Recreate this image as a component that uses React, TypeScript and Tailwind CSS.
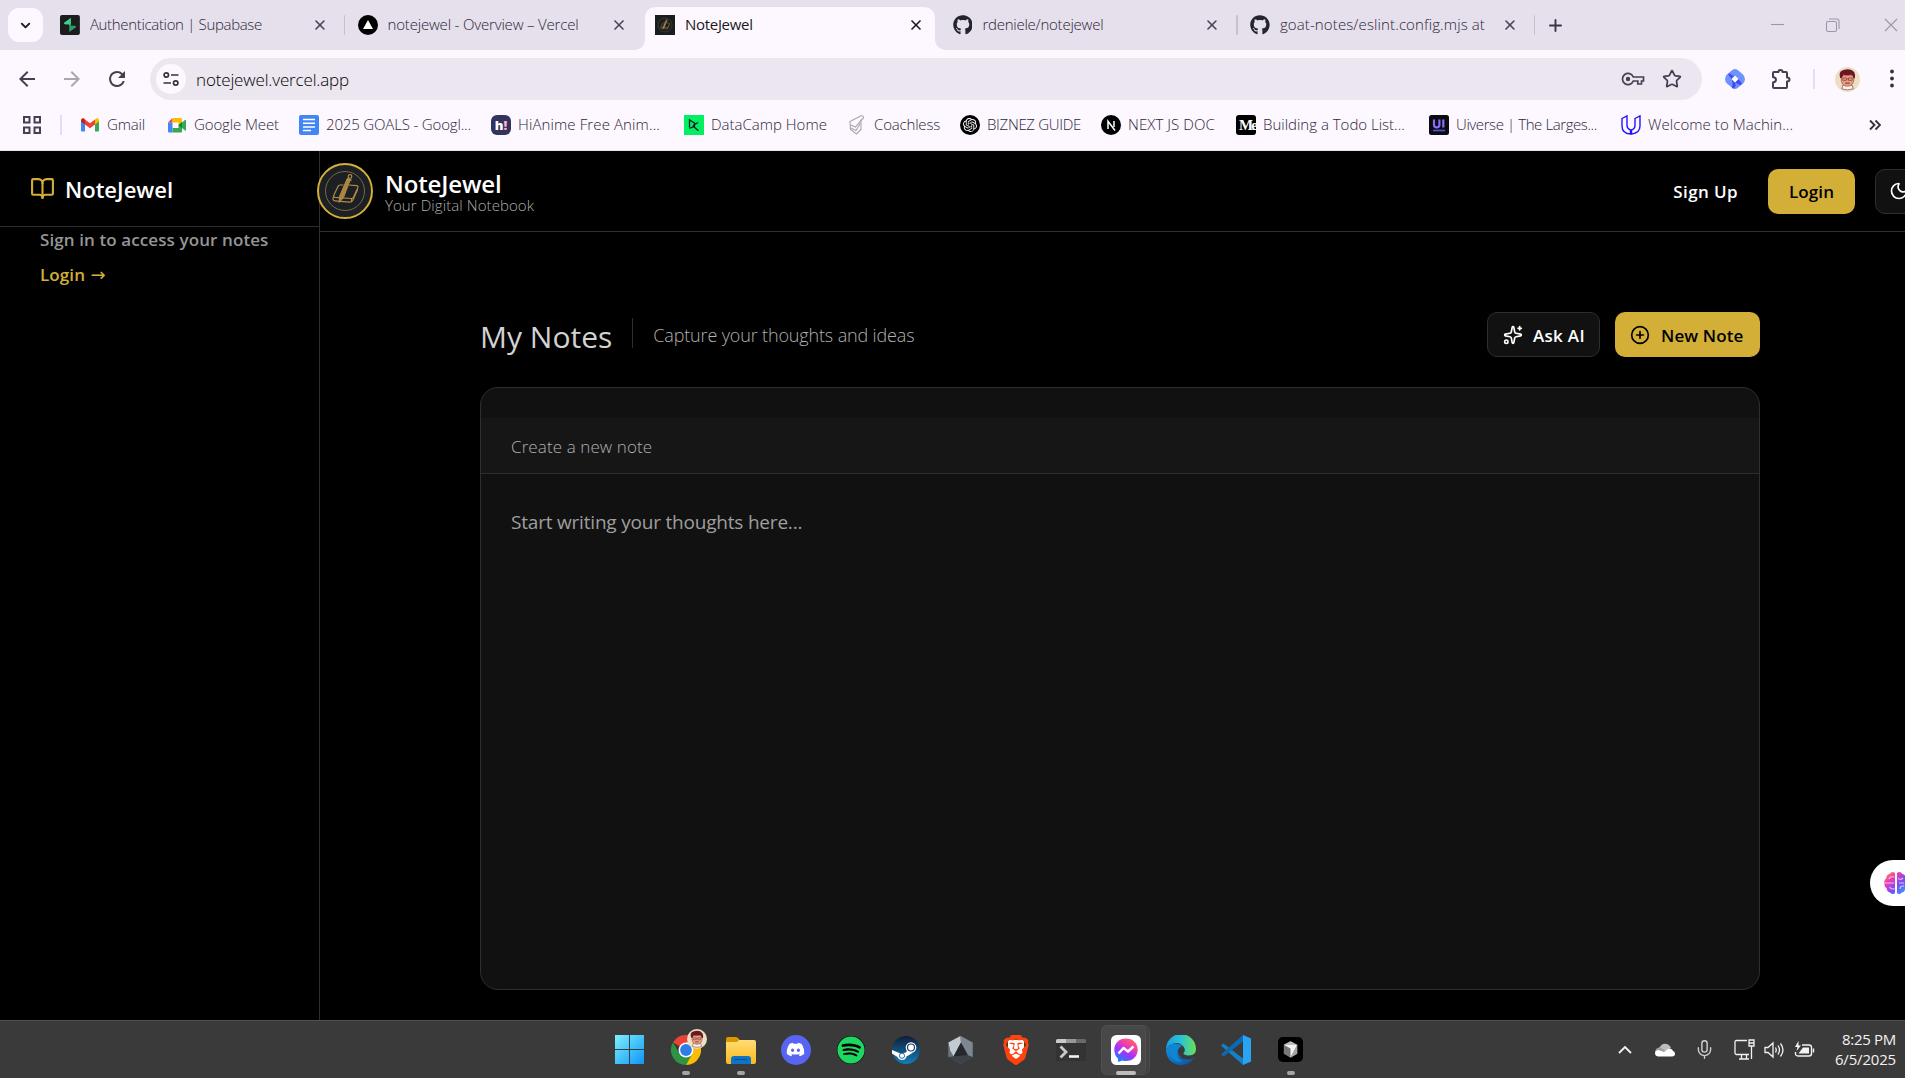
import type { ReactNode } from "react";
import { BookOpen, ChevronDown, Mic, Moon, CirclePlus, Plus, Sparkles, Star, X } from "lucide-react";
import { FaDiscord, FaGithub, FaSpotify } from "react-icons/fa6";
import { SiBrave, SiOpenai } from "react-icons/si";

/* ---------- favicons and brand marks ---------- */

const SupabaseIcon = () => (
  <svg viewBox="0 0 20 20" className="size-5">
    <rect width="20" height="20" rx="2" fill="#1c1c1c" />
    <path d="M10.800 3v6.200H5.200c-1.200 0-1.500-.9-.9-1.700z" fill="#3ecf8e" />
    <path d="M9.300 17v-6.200h5.600c1.200 0 1.500.9.900 1.700z" fill="#2a9d68" />
    <path d="M10.800 3v7.800h-1.500V9.200H5z" fill="#3ecf8e" />
  </svg>
);

const VercelIcon = () => (
  <svg viewBox="0 0 20 20" className="size-5">
    <circle cx="10" cy="10" r="10" fill="#000" />
    <path d="M10 5l5 9H5z" fill="#fff" />
  </svg>
);

const JewelMark = ({ className }: { className: string }) => (
  <svg viewBox="0 0 56 56" className={className} fill="none" stroke="#b08c47" strokeWidth="1.200">
    <circle cx="28" cy="28" r="19.500" strokeWidth="0.900" stroke="#857042" />
    <path d="M23 22h3.500M32 22l7.500.7q2 .3 1.300 2l-4.300 9.500q-.7 1.500-2.500 1.300l-16-1.200q-2-.3-1.100-2.200l4.100-8.700q.7-1.300 2-1.400" />
    <path d="M16.500 33.500q-1.500 4 1.500 4.300l14.500 1.400q2.300.1 3.200-1.800l4.900-11" />
    <path d="M34.500 36v3" />
    <path d="M33.200 17l-6.700 17.500-4.300 5 .3-6 7.500-17.500z" fill="#a9853f" strokeWidth="1" />
    <circle cx="33" cy="13.500" r="1.800" />
    <path d="M30 15.500l4.500 2" strokeWidth="1.600" />
  </svg>
);

const MiniJewel = () => (
  <div className="size-5 bg-[#1a1d20]">
    <JewelMark className="size-5" />
  </div>
);

const Github = () => <FaGithub className="size-5 text-[#24232e]" />;

const GmailIcon = () => (
  <svg viewBox="0 0 20 20" className="size-5">
    <path d="M1 5.500v10q0 1 1 1h3V8z" fill="#4285f4" />
    <path d="M19 5.500v10q0 1-1 1h-3V8z" fill="#34a853" />
    <path d="M15 4.500V9.500l4-3V5.300c0-1.900-2-2.500-3.300-1.500z" fill="#fbbc04" />
    <path d="M5 4.500V9.500l-4-3V5.300c0-1.900 2-2.500 3.300-1.500z" fill="#c5221f" />
    <path d="M5 4.500l5 3.800 5-3.800v5l-5 3.800-5-3.800z" fill="#ea4335" />
  </svg>
);

const MeetIcon = () => (
  <svg viewBox="0 0 20 20" className="size-5">
    <path d="M1 7.500h4.500V17.500H2q-1 0-1-1z" fill="#4285f4" />
    <path d="M1 7.500L5.500 3v4.500z" fill="#ea4335" />
    <path d="M5.500 3H14q1 0 1 1v5l-3.500 2V7.500h-6z" fill="#fbbc04" />
    <path d="M5.500 13h6v-3l3.500-2.500v9q0 1-1 1H5.500z" fill="#34a853" />
    <path d="M15 7.500l3-2.500q1-.6 1 .4v9.700q0 1-1 .4l-3-2.500z" fill="#34a853" />
    <path d="M11.500 10l3.500-3v6z" fill="#188038" />
  </svg>
);

const DocsIcon = () => (
  <svg viewBox="0 0 20 20" className="size-5">
    <rect width="20" height="20" rx="2" fill="#4285f4" />
    <path d="M4 4.500h12M4 8.200h12M4 11.900h12M4 15.600h8" stroke="#fff" strokeWidth="1.500" />
  </svg>
);

const HiAnimeIcon = () => (
  <div className="flex size-5 items-center justify-center rounded-md bg-[#35325c] text-[13px] leading-none font-extrabold text-white">
    h<span className="text-[#ffb3dc]">!</span>
  </div>
);

const DataCampIcon = () => (
  <svg viewBox="0 0 20 20" className="size-5">
    <rect width="20" height="20" fill="#03ef62" />
    <path d="M5.500 12.500V5l5 3v3l-5 2.500M9 10.500l5-3M9.500 11.500l5 4.300" fill="none" stroke="#05192d" strokeWidth="1.300" />
  </svg>
);

const CoachlessIcon = () => (
  <svg viewBox="0 0 20 20" className="size-5" fill="none" stroke="#a8a4ad" strokeWidth="1.100">
    <path d="M3 6.500L14 .8q2.500-.3 2.500 2L14 6v8.500L9.500 19 3.500 14.500z" />
    <path d="M4 10l4.500 2L15 4M4 13l5 2.500L13.500 8" />
  </svg>
);

const OpenAiIcon = () => (
  <div className="flex size-5 items-center justify-center rounded-full bg-black">
    <SiOpenai className="size-3.5 text-white" />
  </div>
);

const NextIcon = () => (
  <svg viewBox="0 0 20 20" className="size-5">
    <circle cx="10" cy="10" r="10" fill="#000" />
    <path d="M7 14V6.300L14 15.500M13 6v6" fill="none" stroke="#fff" strokeWidth="1.500" />
  </svg>
);

const MediumIcon = () => (
  <div className="flex size-5 items-center overflow-hidden rounded-[3px] bg-black pl-[3px] font-['Liberation_Serif'] text-[15px] leading-none font-bold tracking-[-2px] text-white">
    Me
  </div>
);

const UiverseIcon = () => (
  <svg viewBox="0 0 20 20" className="size-5">
    <rect width="20" height="20" rx="2.500" fill="#0b0b14" />
    <path d="M5 4.500v5.500q0 2.300 2.700 2.300T10.400 10V4.500M14.300 4.500v8" fill="none" stroke="#8b6cf5" strokeWidth="2.200" />
    <path d="M4 15.500h12" stroke="#5b50e6" strokeWidth="1.600" />
  </svg>
);

const UdacityIcon = () => (
  <svg viewBox="0 0 20 20" className="size-5" fill="none" stroke="#2015ff" strokeWidth="1.400">
    <path d="M1 3.500L6 .9v9.600q0 3 3.500 4.500v4Q1 18.500 1 11z" />
    <path d="M14 3.500L19 .9V11q0 7-8.500 8.100V15q3.500-1.300 3.500-4.500z" />
  </svg>
);

const Avatar = ({ className }: { className: string }) => (
  <svg viewBox="0 0 24 24" className={className}>
    <circle cx="12" cy="12" r="12" fill="#eddfc5" />
    <path d="M6.500 21l1-3.500q4.500-2 9 0l1 3.500q-5.500 2-11 0z" fill="#fbf3ec" stroke="#7a3330" strokeWidth=".6" />
    <path d="M6 8h12v5q-1 5.500-6 5.500T6 13z" fill="#e6a183" stroke="#7a2b2b" strokeWidth=".5" />
    <path d="M5 10.500Q3 4.500 7.500 3 15 .5 18.500 5q1.500 3 .5 6l-1.500-.5Q17.500 8 15.500 7.500q-4 .8-7.500 0L6.500 10.500z" fill="#6b1620" />
    <path d="M7.500 10.500H11v2.300H7.500zM13 10.500h3.500v2.300H13zM11 11.500h2" fill="none" stroke="#8a3b35" strokeWidth=".7" />
    <path d="M9.800 15.500h4.400" stroke="#8f2d2a" strokeWidth="1" />
  </svg>
);

/* ---------- browser chrome ---------- */

type Tab = { title: string; icon: ReactNode; text: string; active?: boolean; divider?: boolean };

const tabs: Tab[] = [
  { title: "Authentication | Supabase", icon: <SupabaseIcon />, text: "tracking-[-0.33px]", divider: true },
  { title: "notejewel - Overview – Vercel", icon: <VercelIcon />, text: "tracking-[-0.18px]" },
  { title: "NoteJewel", icon: <MiniJewel />, text: "tracking-[-0.3px]", active: true },
  { title: "rdeniele/notejewel", icon: <Github />, text: "tracking-[-0.24px]", divider: true },
  { title: "goat-notes/eslint.config.mjs at", icon: <Github />, text: "tracking-[0.12px]", divider: true },
];

const TabItem = ({ tab }: { tab: Tab }) => (
  <div className="relative h-[50px] w-[297.500px] shrink-0">
    {tab.active && (
      <svg viewBox="0 0 315 43" className="absolute top-[7px] -left-[10px] h-[43px] w-[315px]">
        <path d="M0 43q12 0 12-12V12Q12 0 24 0H290q12 0 12 12v19q0 12 13 12z" fill="#fdf7ff" />
      </svg>
    )}
    <div className="relative flex h-[50px] items-center pl-[12px]">
      {tab.icon}
      <div
        className={`ml-[10px] w-[215px] overflow-hidden pb-[2px] text-[15px] whitespace-nowrap ${tab.text} ${
          tab.active ? "text-[#1c1824]" : "font-light text-[#2b2638]"
        }`}
      >
        {tab.title}
      </div>
      <X className={`ml-[8px] size-4 ${tab.active ? "text-[#1f1b26]" : "text-[#4a4458]"}`} strokeWidth={2.5} />
      {tab.divider && <div className="ml-[16px] h-5 w-[2px] rounded bg-[#c9c0ce]" />}
    </div>
  </div>
);

const TabStrip = () => (
  <div className="flex h-[50px] items-center bg-[#e6dfec]">
    <div className="ml-[8px] flex h-[34px] w-[35px] items-center justify-center rounded-[11px] bg-[#fdf7ff]">
      <ChevronDown className="size-[15px] text-[#1b1820]" strokeWidth={3} />
    </div>
    <div className="ml-[5px] flex">
      {tabs.map((t) => (
        <TabItem key={t.title} tab={t} />
      ))}
    </div>
    <Plus className="ml-[10.500px] size-[19px] text-[#3a3548]" strokeWidth={2.400} />
    <svg viewBox="0 0 130 16" className="ml-[205px] h-4 w-[130px] shrink-0" fill="none" stroke="#9d96a4" strokeWidth="1.100">
      <path d="M1 7.500h13" />
      <rect x="56.500" y="4.500" width="10" height="10" rx="1.500" />
      <path d="M59 2h8q2 0 2 2v8M115 2l12 12M127 2l-12 12" />
    </svg>
  </div>
);

const Toolbar = () => (
  <div className="flex h-[58px] items-center bg-[#fdf7ff]">
    <svg viewBox="0 0 24 24" className="ml-[15px] size-6" fill="#463f52">
      <path d="M20 11H7.830l5.590-5.590L12 4l-8 8 8 8 1.410-1.410L7.830 13H20z" />
    </svg>
    <svg viewBox="0 0 24 24" className="ml-[21px] size-6" fill="#aba5b1">
      <path d="M12 4l-1.410 1.410L16.170 11H4v2h12.170l-5.580 5.590L12 20l8-8z" />
    </svg>
    <svg viewBox="0 0 24 24" className="ml-[21px] size-6" fill="#463f52">
      <path d="M17.650 6.350A7.960 7.960 0 0 0 12 4a8 8 0 1 0 7.730 10h-2.080A6 6 0 1 1 12 6c1.660 0 3.140.69 4.220 1.780L13 11h7V4z" />
    </svg>
    <div className="ml-[21px] flex h-[42px] w-[1552px] shrink-0 items-center rounded-full bg-[#ece6f0]">
      <div className="ml-[6px] flex size-[30px] items-center justify-center rounded-full bg-[#fdf7ff]">
        <svg viewBox="0 0 18 18" className="size-[18px]" fill="none" stroke="#37313f" strokeWidth="1.700">
          <circle cx="4.300" cy="5" r="2.200" />
          <path d="M9 5h7.500M1.500 13H9" />
          <circle cx="13.700" cy="13" r="2.200" />
        </svg>
      </div>
      <span className="ml-[10px] flex-1 pt-[1px] text-[17px] font-light tracking-[-0.15px] text-black">
        notejewel.vercel.app
      </span>
      <svg viewBox="0 0 24 24" className="size-6" fill="none" stroke="#463f52" strokeWidth="1.700">
        <path d="M12.300 10h10.200v4h-2v3h-3.700v-3h-4.500a5.600 5.600 0 1 1 0-4z" />
        <circle cx="7" cy="12" r="2.200" fill="#463f52" stroke="none" />
      </svg>
      <Star className="mr-[20px] ml-[17px] size-[20px] text-[#463f52]" strokeWidth={2.100} />
    </div>
    <svg viewBox="0 0 20 20" className="ml-[23px] size-5 shrink-0">
      <path d="M10 0q1.500 0 2.700 1l5 4.200Q20 7.200 20 10t-2.300 4.800l-5 4.200Q11.500 20 10 20t-2.700-1l-5-4.200Q0 12.800 0 10t2.300-4.800l5-4.200Q8.500 0 10 0z" fill="#6f92ff" />
      <path d="M3 5Q5.500 3.500 7 6.500l3 0L6.500 10l3.500 3.500q2 3.500-1.500 6Q6 19.500 7.500 16q1-2.500-1-6L5 8zM13.500 10L17 14.500q-2 2.500-3 1L10 13.500z" fill="#3f4df0" />
      <path d="M10 6.500l3.500 3.500-3.500 3.500L6.500 10z" fill="#fff" />
    </svg>
    <svg viewBox="0 0 24 24" className="ml-[24px] size-6 shrink-0" fill="none" stroke="#463f52" strokeWidth="2">
      <path d="M4 6q0-1 1-1h4.500q0-2 2-2t2 2H17q1 0 1 1v4.500q2.500 0 2.500 2t-2.500 2V20q0 1-1 1H5q-1 0-1-1v-4.500q3-.5 3-2.700T4 10z" strokeLinejoin="round" />
    </svg>
    <div className="ml-[20px] h-5 w-[2px] bg-[#e8dafa]" />
    <Avatar className="ml-[20px] size-[25px] shrink-0" />
    <svg viewBox="0 0 6 20" className="ml-[29px] h-5 w-1.5 shrink-0" fill="#37313f">
      <circle cx="3" cy="2.500" r="1.900" />
      <circle cx="3" cy="9.500" r="1.900" />
      <circle cx="3" cy="16.500" r="1.900" />
    </svg>
  </div>
);

const bookmarks: { label: string; icon: ReactNode; cell: string; text: string }[] = [
  { label: "Gmail", icon: <GmailIcon />, cell: "w-[87px]", text: "tracking-[-0.17px]" },
  { label: "Google Meet", icon: <MeetIcon />, cell: "w-[132px]", text: "tracking-[-0.11px]" },
  { label: "2025 GOALS - Googl...", icon: <DocsIcon />, cell: "w-[192px]", text: "tracking-[-0.16px]" },
  { label: "HiAnime Free Anim...", icon: <HiAnimeIcon />, cell: "w-[193px]", text: "tracking-[0.11px]" },
  { label: "DataCamp Home", icon: <DataCampIcon />, cell: "w-[163px]", text: "" },
  { label: "Coachless", icon: <CoachlessIcon />, cell: "w-[113px]", text: "tracking-[-0.18px]" },
  { label: "BIZNEZ GUIDE", icon: <OpenAiIcon />, cell: "w-[141px]", text: "tracking-[-0.31px]" },
  { label: "NEXT JS DOC", icon: <NextIcon />, cell: "w-[135px]", text: "tracking-[0.08px]" },
  { label: "Building a Todo List...", icon: <MediumIcon />, cell: "w-[193px]", text: "" },
  { label: "Uiverse | The Larges...", icon: <UiverseIcon />, cell: "w-[192px]", text: "tracking-[-0.41px]" },
  { label: "Welcome to Machin...", icon: <UdacityIcon />, cell: "w-[251px]", text: "tracking-[0.06px]" },
];

const BookmarkBar = () => (
  <div className="flex h-[43px] items-center border-b border-[#e6dfec] bg-[#fdf7ff] pb-[8px]">
    <svg viewBox="0 0 18 18" className="ml-[23px] size-[18px]" fill="none" stroke="#463f52" strokeWidth="2">
      <path d="M1 1h5.500v5.500H1zM11.500 1H17v5.500h-5.500zM1 11.500h5.500V17H1zM11.500 11.500H17V17h-5.500z" />
    </svg>
    <div className="ml-[19px] h-5 w-[2px] bg-[#e8dafa]" />
    <div className="ml-[18px] flex">
      {bookmarks.map((b) => (
        <div key={b.label} className={`flex shrink-0 items-center gap-[7px] ${b.cell}`}>
          {b.icon}
          <span className={`-mt-[2px] text-[15px] leading-5 font-light whitespace-nowrap text-[#2b2638] ${b.text}`}>
            {b.label}
          </span>
        </div>
      ))}
    </div>
    <svg viewBox="0 0 12 12" className="-ml-[3px] size-3" fill="none" stroke="#37313f" strokeWidth="1.900">
      <path d="M1 1.500L5.500 6 1 10.500M6.500 1.500L11 6l-4.500 4.500" />
    </svg>
  </div>
);

/* ---------- application ---------- */

const Sidebar = () => (
  <aside className="flex w-[320px] shrink-0 flex-col border-r border-[#2e2e2e]">
    <div className="flex h-[76px] items-center gap-[10px] border-b border-[#2e2e2e] pl-[30px]">
      <BookOpen className="size-[25px] text-[#d4af37]" strokeWidth={2} />
      <span className="pt-[2px] text-[22px] font-semibold text-white">NoteJewel</span>
    </div>
    <div className="flex flex-col pl-[40px] text-[17px] font-semibold">
      <span className="h-[35px] leading-[26px] tracking-[0.1px] whitespace-nowrap text-[#969696]">
        Sign in to access your notes
      </span>
      <a className="leading-[26px] tracking-[0.1px] text-[#d4af37]">
        Login <span className="ml-[1px] font-['DejaVu_Sans'] text-[18px] font-normal">→</span>
      </a>
    </div>
  </aside>
);

const Header = () => (
  <header className="flex h-[81px] shrink-0 items-center border-b border-[#2e2e2e]">
    <div className="relative -ml-[3px] flex size-[56px] shrink-0 items-center justify-center rounded-full border-[2.500px] border-[#d4af37] bg-[#1c1f23]">
      <JewelMark className="size-[56px] shrink-0" />
    </div>
    <div className="ml-[12px] flex flex-1 flex-col pt-[1px]">
      <span className="text-[24px] leading-[27px] font-semibold tracking-[-0.15px] text-white">NoteJewel</span>
      <span className="text-[15px] leading-[16px] font-light tracking-[0.08px] text-[#adadad]">Your Digital Notebook</span>
    </div>
    <span className="pt-[2px] text-[17px] font-semibold tracking-[0.4px] text-white">Sign Up</span>
    <button className="ml-[30px] h-[45px] w-[87px] rounded-[10px] bg-[#d4af37] pt-[2px] text-[17px] font-semibold tracking-[0.1px] text-black">
      Login
    </button>
    <div className="mr-[-17px] ml-[20px] flex h-[45px] w-[47px] shrink-0 items-center rounded-[10px] border border-[#2e2e2e] bg-[#111111] pb-[1px] pl-[13px] text-white">
      <Moon className="size-[20px]" strokeWidth={2} />
    </div>
  </header>
);

const Notes = () => (
  <section className="mr-[145px] ml-[160px] flex flex-1 flex-col">
    <div className="mt-[80px] flex h-[45px] items-center">
      <h1 className="pt-[3px] text-[30px] font-medium text-[#d2d2d2]">My Notes</h1>
      <div className="mb-[3px] ml-[20px] h-[30px] w-px bg-[#2e2e2e]" />
      <p className="ml-[20px] flex-1 pt-[2px] text-[18px] font-light tracking-[-0.15px] text-[#b0b0b0]">
        Capture your thoughts and ideas
      </p>
      <button className="flex h-[45px] w-[113px] items-center gap-[10px] rounded-[10px] border border-[#2e2e2e] bg-[#111111] pl-[15px] text-[17px] font-semibold tracking-[0.3px] text-white">
        <Sparkles className="size-[20px]" strokeWidth={2} />
        <span className="pt-[2px]">Ask AI</span>
      </button>
      <button className="ml-[15px] flex h-[45px] w-[145px] items-center gap-[11px] rounded-[10px] bg-[#d4af37] pl-[15px] text-[17px] font-semibold tracking-[0.1px] text-black">
        <CirclePlus className="size-[20px]" strokeWidth={2} />
        <span className="pt-[2px]">New Note</span>
      </button>
    </div>
    <div className="mt-[30px] flex h-[603px] flex-col overflow-hidden rounded-[18px] border border-[#2e2e2e] bg-[#111111]">
      <div className="mt-[30px] flex h-[56px] items-center border-b border-[#2e2e2e] bg-[#161616] pt-[3px] pl-[30px] text-[17px] font-light tracking-[0.1px] text-[#b0b0b0]">
        Create a new note
      </div>
      <div className="pt-[34px] pl-[30px] text-[19px] leading-7 tracking-[-0.2px] text-[#9f9f9f]">
        Start writing your thoughts here...
      </div>
    </div>
  </section>
);

const Assistant = () => (
  <div className="absolute top-[709px] right-0 flex h-[46px] w-[35px] items-center overflow-hidden rounded-l-full bg-white pl-[14px]">
    <svg viewBox="0 0 24 24" className="size-6 shrink-0">
      <defs>
        <linearGradient id="brain" x1="0" y1="0" x2="1" y2="1">
          <stop offset="0" stopColor="#ffa51f" />
          <stop offset=".3" stopColor="#f03bb8" />
          <stop offset=".6" stopColor="#7a4df5" />
          <stop offset="1" stopColor="#1fb6ff" />
        </linearGradient>
      </defs>
      <path
        d="M11 2Q8-.5 5.500 3 2 4 2.200 7.500-.5 9 .5 12.500q-.5 3 2 4.500.5 4 3.500 4.500 3 3 5 .5zM13 2q3-2.500 5.500 1Q22 4 21.800 7.500q2.700 1.500 1.700 5 .5 3-2 4.500-.5 4-3.500 4.500-3 3-5 .5z"
        fill="url(#brain)"
      />
      <path d="M5 8q1-3 5.500-2M1 12h9M5.500 16q2 3 5 1.500M14 7q2 3 5 0M15 12h5M16 18q-.5-3 4-3" fill="none" stroke="#fff" strokeOpacity=".65" strokeWidth="1.200" />
    </svg>
  </div>
);

/* ---------- taskbar ---------- */

const WindowsIcon = () => (
  <svg viewBox="0 0 30 30" className="size-[29px]">
    <defs>
      <linearGradient id="win" x1="0" y1="0" x2="1" y2="1">
        <stop offset="0" stopColor="#7df0ff" />
        <stop offset="1" stopColor="#0f95f5" />
      </linearGradient>
    </defs>
    <path d="M0 0h14.500v14.500H0zM15.500 0H30v14.500H15.500zM0 15.500h14.500V30H0zM15.500 15.500H30V30H15.500z" fill="url(#win)" />
  </svg>
);

const ChromeIcon = () => (
  <div className="relative size-[30px]">
    <svg viewBox="0 0 30 30" className="size-[30px]">
      <path d="M15 15L2 7.500A15 15 0 0 1 28 7.500z" fill="#ea4335" />
      <path d="M15 15L8.500 18.700 2 7.500A15 15 0 0 0 15 30l6.500-11.200z" fill="#2d9445" />
      <path d="M15 7.500h13A15 15 0 0 1 15 30l6.200-11.200z" fill="#fbbc04" />
      <circle cx="15" cy="15" r="7.500" fill="#fff" />
      <circle cx="15" cy="15" r="5.900" fill="#2f7de9" />
    </svg>
    <Avatar className="absolute -top-[6px] left-[16px] size-[20px]" />
  </div>
);

const ExplorerIcon = () => (
  <svg viewBox="0 0 30 30" className="size-[30px]">
    <defs>
      <linearGradient id="folder" x1="0" y1="0" x2="0" y2="1">
        <stop offset="0" stopColor="#ffdd74" />
        <stop offset="1" stopColor="#f8b91c" />
      </linearGradient>
    </defs>
    <path d="M0 4q0-2 2-2h8q1.500 0 2.500 1.500L14 5v5H0z" fill="#dd9500" />
    <path d="M0 7h11l2-2h15q2 0 2 2v20q0 2-2 2H2q-2 0-2-2z" fill="url(#folder)" />
    <path d="M5 29v-5q0-3 3-3h14q3 0 3 3v5z" fill="#0f74c4" />
    <path d="M8.500 24.500h13" stroke="#0b4f8c" strokeWidth="1.200" />
  </svg>
);

const DiscordIcon = () => (
  <div className="flex size-[30px] items-center justify-center rounded-full bg-[#5865f2]">
    <FaDiscord className="size-[19px] text-white" />
  </div>
);

const SpotifyIcon = () => (
  <div className="flex size-[28px] items-center justify-center rounded-full bg-black">
    <FaSpotify className="size-[28px] text-[#1ed760]" />
  </div>
);

const SteamIcon = () => (
  <svg viewBox="0 0 28 28" className="size-[28px]">
    <defs>
      <linearGradient id="steam" x1="0" y1="0" x2="0" y2="1">
        <stop offset="0" stopColor="#111d3a" />
        <stop offset="1" stopColor="#117fb8" />
      </linearGradient>
    </defs>
    <circle cx="14" cy="14" r="14" fill="url(#steam)" />
    <path d="M0 14l8.500 3.500 5.500-1 3-5 3.500 5.500-6 3.500q-1 3.500-4.500 3.500-3.300 0-4.500-3L0 17.500z" fill="#fff" />
    <circle cx="19" cy="11.500" r="5.300" fill="#fff" />
    <circle cx="19" cy="11.500" r="3.500" fill="#fff" stroke="#1c3d66" strokeWidth="1.200" />
    <circle cx="10" cy="19.700" r="2.600" fill="none" stroke="#16608f" strokeWidth=".9" />
  </svg>
);

const PolygonIcon = () => (
  <svg viewBox="0 0 28 30" className="h-[28px] w-[27px]">
    <path d="M14 0l13 7v15.500L14 30 1 22.500V7z" fill="#59626c" />
    <path d="M14 0L1 7l2 9 3.500 6L14.500 7z" fill="#c3cbd2" />
    <path d="M14 0l13 7v15.500l-5-2L14.500 7z" fill="#7d8791" />
    <path d="M1 7v15.500l5.500-.5L3 16z" fill="#6b747d" />
    <path d="M1 22.500L14 30l13-7.500-5-2-15.500 1.500z" fill="#3c4248" />
    <path d="M14.500 7l7.500 13.500L6.500 22z" fill="#24272b" />
  </svg>
);

const BraveIcon = () => (
  <div className="relative flex size-[30px] items-center justify-center">
    <div className="absolute h-[20px] w-[16px] rounded-b-full bg-white" />
    <SiBrave className="relative size-[30px] text-[#ff4310]" />
  </div>
);

const TerminalIcon = () => (
  <svg viewBox="0 0 30 24" className="h-6 w-[30px]">
    <rect y="1" width="30" height="22" rx="1.500" fill="#333333" />
    <path d="M0 2.500Q0 1 1.500 1H10v4H0z" fill="#c8c8c8" />
    <path d="M10 1h10v4H10z" fill="#979797" />
    <path d="M20 1h8.500Q30 1 30 2.500V5H20z" fill="#6a6a6a" />
    <path d="M4.500 8.500L10 14l-5.500 5.500" fill="none" stroke="#c9c9c9" strokeWidth="2.800" />
    <path d="M13 18.500h10" stroke="#f2f2f2" strokeWidth="2.600" />
  </svg>
);

const MessengerIcon = () => (
  <svg viewBox="0 0 30 30" className="size-[30px]">
    <defs>
      <linearGradient id="msg" x1=".8" y1="0" x2=".2" y2="1">
        <stop offset="0" stopColor="#ff6a5c" />
        <stop offset=".3" stopColor="#f23fa8" />
        <stop offset=".6" stopColor="#a033ff" />
        <stop offset="1" stopColor="#0a8bff" />
      </linearGradient>
    </defs>
    <rect width="30" height="30" rx="5.500" fill="#fff" />
    <path d="M15 3.500c6.800 0 11.700 4.800 11.700 11.200S21.800 26 15 26q-2 0-3.700-.6L8 26.800q-1 .3-1-.8v-2.600q-3.700-3.200-3.700-8.700C3.300 8.300 8.200 3.500 15 3.500z" fill="url(#msg)" />
    <path d="M7.500 18.500l5-5.500 4.500 3.500 5.500-5" fill="none" stroke="#fff" strokeWidth="2.500" strokeLinejoin="round" />
  </svg>
);

const EdgeIcon = () => (
  <svg viewBox="0 0 30 30" className="size-[30px]">
    <defs>
      <linearGradient id="edgeTop">
        <stop offset="0" stopColor="#1c9ee0" />
        <stop offset=".5" stopColor="#2ac3d6" />
        <stop offset="1" stopColor="#6be052" />
      </linearGradient>
      <linearGradient id="edgeLow" x1="0" y1="0" x2="1" y2="1">
        <stop offset="0" stopColor="#1492de" />
        <stop offset="1" stopColor="#0c4fa0" />
      </linearGradient>
    </defs>
    <path d="M0 15A15 15 0 0 0 19 29.500q6-1.500 9-7-3 2-7 2-8-.5-9-7-.5-5 4-7Q9 6 0 15z" fill="url(#edgeLow)" />
    <path d="M0 14A15 15 0 0 1 30 14q0 6-7 6.500-6 0-5.500-2.500 2-1.500 1-4.500Q16 8 10.500 8 4 8 0 14z" fill="url(#edgeTop)" />
    <path d="M0 15q1-6 8.500-6.500 5 0 7.500 2.500-5 2-5.500 7 0 6 6 8.500-7 1-10.500-4Q3 18 0 15z" fill="#0f86d4" />
  </svg>
);

const VsCodeIcon = () => (
  <svg viewBox="0 0 30 30" className="size-[30px]">
    <path d="M0 10.500l2.500-2L22 23.500V30z" fill="#1580c8" />
    <path d="M0 19.500l2.500 2L22 6.500V0z" fill="#0a6ab5" />
    <path d="M22 0l8 3.500v23L22 30z" fill="#2ba3f3" />
  </svg>
);

const CursorIcon = () => (
  <svg viewBox="0 0 26 26" className="size-[25px]">
    <rect width="26" height="26" rx="5" fill="#000" />
    <path d="M13 4.500l7 3.500v9.500L13 21.500l-7-4V8z" fill="#777" />
    <path d="M6 8l7-3.500L20 8z" fill="#bdbdbd" />
    <path d="M6 8h14l-7 13.500V12z" fill="#f4f4f4" />
    <path d="M20 8v9.500l-7 4z" fill="#a5a5a5" />
  </svg>
);

const apps: { name: string; icon: ReactNode; state?: "open" | "active" }[] = [
  { name: "chrome", icon: <ChromeIcon />, state: "open" },
  { name: "explorer", icon: <ExplorerIcon />, state: "open" },
  { name: "discord", icon: <DiscordIcon /> },
  { name: "spotify", icon: <SpotifyIcon /> },
  { name: "steam", icon: <SteamIcon /> },
  { name: "polygon", icon: <PolygonIcon /> },
  { name: "brave", icon: <BraveIcon /> },
  { name: "terminal", icon: <TerminalIcon /> },
  { name: "messenger", icon: <MessengerIcon />, state: "active" },
  { name: "edge", icon: <EdgeIcon /> },
  { name: "vscode", icon: <VsCodeIcon /> },
  { name: "cursor", icon: <CursorIcon />, state: "open" },
];

const Taskbar = () => (
  <footer className="flex h-[58px] shrink-0 items-center border-t border-[#525252] bg-[#3a3a3a]">
    <div className="flex w-[658px] shrink-0 justify-end pr-[14px]">
      <WindowsIcon />
    </div>
    {apps.map((a) => (
      <div key={a.name} className="relative flex h-[58px] w-[55px] shrink-0 items-center justify-center">
        {a.state === "active" && (
          <>
            <div className="absolute inset-y-[4px] left-[10px] w-[42px] rounded-md border border-[#4c4c4c] bg-[#424242]" />
            <div className="absolute inset-y-[4px] left-[3px] w-[45px] rounded-md border border-[#505050] bg-[#484848]" />
          </>
        )}
        <div className="relative">{a.icon}</div>
        {a.state === "open" && <div className="absolute bottom-[4px] h-[4px] w-[8px] rounded-full bg-[#a5a5a5]" />}
        {a.state === "active" && <div className="absolute bottom-[4px] h-[4px] w-[20px] rounded-full bg-[#bdbdbd]" />}
      </div>
    ))}
    <div className="ml-auto flex items-center text-[#f2f2f2]">
      <svg viewBox="0 0 14 8" className="h-2 w-3.5" fill="none" stroke="currentColor" strokeWidth="1.800">
        <path d="M1 7l6-6 6 6" />
      </svg>
      <svg viewBox="0 0 20 14" className="ml-[23px] h-3.5 w-5">
        <path d="M1 8q0-3 3.500-3.500Q7-.5 12 1q3 .8 4 4l-6 4z" fill="#bdbdbd" />
        <path d="M0 9q1-5 6-4l6 4H0z" fill="#9c9c9c" />
        <path d="M3 13.500q-3-.5-3-3.500 0-2.500 3.500-3L9 9l4-3q4-1 5 2 2 .5 2 2.800 0 2.700-3 2.700z" fill="#fff" />
      </svg>
      <Mic className="ml-[19px] size-[21px] text-[#d0d0d0]" strokeWidth={1.600} />
      <svg viewBox="0 0 21 21" className="ml-[19px] size-[21px]" fill="none" stroke="currentColor" strokeWidth="1.300">
        <path d="M13 1.500H2.500Q1 1.500 1 3v11q0 1.500 1.500 1.500H15M5 20h10M7.500 16v4M12.500 16v4M15 1h5v6h-5zM17.500 7v13M15 4h5" />
      </svg>
      <svg viewBox="0 0 21 18" className="ml-[9px] h-[18px] w-[21px]" fill="none" stroke="currentColor" strokeWidth="1.300">
        <path d="M1 6.500h3L9 2v14l-5-4.500H1zM11.500 6.500q1.500 2.500 0 5M14 4.500q3 4.500 0 9M16.500 2.500q5 6.500 0 13" />
      </svg>
      <svg viewBox="0 0 21 17" className="ml-[9px] h-[17px] w-[21px]" fill="none" stroke="currentColor" strokeWidth="1.400">
        <path d="M8 4h7q2.500 0 2.500 2.500v6Q17.500 15 15 15H4q-2.500 0-2.500-2.500V11M19.500 7.500v4" />
        <path d="M9 6.500h6v6H4.500z" fill="currentColor" stroke="none" />
        <path d="M4.500 0L1 6h2.500L2.500 10 7 4.500H4.500z" fill="currentColor" stroke="none" />
      </svg>
      <div className="mr-[9px] mb-[2px] ml-[20px] flex flex-col items-end text-[15px] leading-[20px]">
        <span className="tracking-[-0.3px]">8:25 PM</span>
        <span className="tracking-[-0.18px]">6/5/2025</span>
      </div>
    </div>
  </footer>
);

export default function App() {
  return (
    <div className="flex h-[1078px] w-[1905px] flex-col overflow-hidden bg-black font-['Open_Sans','Noto_Sans',sans-serif]">
      <TabStrip />
      <Toolbar />
      <BookmarkBar />
      <div className="relative flex flex-1 overflow-hidden bg-black">
        <Sidebar />
        <main className="flex min-w-0 flex-1 flex-col">
          <Header />
          <Notes />
        </main>
        <Assistant />
      </div>
      <Taskbar />
    </div>
  );
}
